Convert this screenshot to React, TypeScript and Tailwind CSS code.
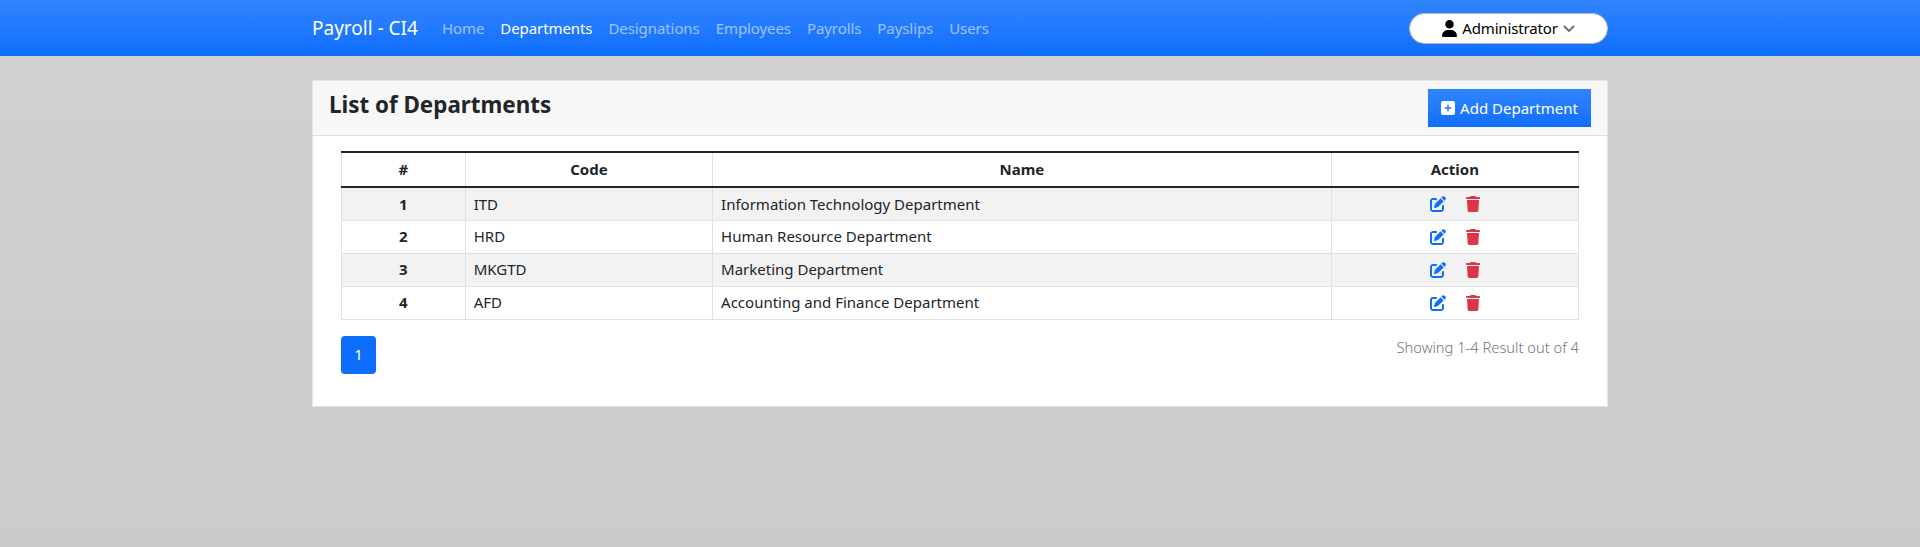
import { FaPenToSquare, FaSquarePlus, FaTrash, FaUser } from 'react-icons/fa6';

const navLinks = ['Home', 'Departments', 'Designations', 'Employees', 'Payrolls', 'Payslips', 'Users'];

const departments = [
  { id: 1, code: 'ITD', name: 'Information Technology Department' },
  { id: 2, code: 'HRD', name: 'Human Resource Department' },
  { id: 3, code: 'MKGTD', name: 'Marketing Department' },
  { id: 4, code: 'AFD', name: 'Accounting and Finance Department' },
];

function Navbar() {
  return (
    <nav className="h-14 bg-gradient-to-b from-[#3184fd] to-[#0d6efd]">
      <div className="mx-auto flex h-full w-[1296px] items-center justify-between">
        <div className="flex items-center">
          <span className="mr-4 text-[19px] leading-[30px] text-white">Payroll - CI4</span>
          <ul className="flex">
            {navLinks.map((link) => (
              <li
                key={link}
                className={`px-2 text-[15px] leading-6 tracking-[-0.08px] ${link === 'Departments' ? 'text-white' : 'text-white/55'}`}
              >
                {link}
              </li>
            ))}
          </ul>
        </div>
        <button
          type="button"
          className="flex h-[31px] w-[199px] items-center justify-center rounded-full border border-[#b6b9bc] bg-white text-[15px] tracking-[-0.15px] text-black"
        >
          <FaUser className="mr-[5px] h-[17px] w-[15px]" />
          Administrator
          <svg viewBox="0 0 12 7" className="ml-[5px] h-[7px] w-3 text-[#6c757d]" fill="none">
            <path d="M1 1l5 5 5-5" stroke="currentColor" strokeWidth="2" />
          </svg>
        </button>
      </div>
    </nav>
  );
}

function DepartmentsTable() {
  return (
    <table className="w-full table-fixed border-collapse text-[#212529]">
      <colgroup>
        <col className="w-[10%]" />
        <col className="w-[20%]" />
        <col className="w-[50%]" />
        <col className="w-[20%]" />
      </colgroup>
      <thead>
        <tr className="h-[35px] border-t-2 border-b-2 border-t-[#212529] border-b-[#212529]">
          {['#', 'Code', 'Name', 'Action'].map((heading) => (
            <th key={heading} className="border-x border-[#dee2e6] text-center font-bold">
              {heading}
            </th>
          ))}
        </tr>
      </thead>
      <tbody>
        {departments.map((department) => (
          <tr key={department.id} className="h-[33px] odd:bg-[#f2f2f2]">
            <td className="border border-[#dee2e6] px-2 text-center font-bold">{department.id}</td>
            <td className="border border-[#dee2e6] px-2">{department.code}</td>
            <td className="border border-[#dee2e6] px-2">{department.name}</td>
            <td className="border border-[#dee2e6] px-2">
              <div className="flex items-center justify-center gap-5">
                <FaPenToSquare className="h-4 w-4 text-[#0d6efd]" />
                <FaTrash className="h-4 w-3.5 text-[#dc3545]" />
              </div>
            </td>
          </tr>
        ))}
      </tbody>
    </table>
  );
}

export default function App() {
  return (
    <div className="min-h-[547px] bg-gradient-to-b from-[#d0d1d0] to-[#cacbcd] font-['Noto_Sans','Open_Sans',sans-serif] text-[15px]">
      <Navbar />
      <main className="mx-auto mt-6 w-[1296px]">
        <section className="h-[327px] border border-black/10 bg-white">
          <header className="flex h-[55px] justify-between border-b border-black/10 bg-[#f7f7f7] px-4 py-2">
            <h3 className="text-[22.4px] leading-[31px] font-bold text-[#212529]">List of Departments</h3>
            <button
              type="button"
              className="flex h-[38px] w-[163px] items-center justify-center gap-[5px] bg-gradient-to-b from-[#3184fd] to-[#0d6efd] text-white"
            >
              <FaSquarePlus className="h-4 w-3.5" />
              Add Department
            </button>
          </header>
          <div className="px-7 pt-[15px]">
            <DepartmentsTable />
            <div className="mt-4 flex items-start justify-between">
              <span className="flex h-[38px] w-[35px] items-center justify-center rounded bg-[#0d6efd] text-white">
                1
              </span>
              <p className="text-[14.7px] font-light text-[#6c757d]">Showing 1-4 Result out of 4</p>
            </div>
          </div>
        </section>
      </main>
    </div>
  );
}
